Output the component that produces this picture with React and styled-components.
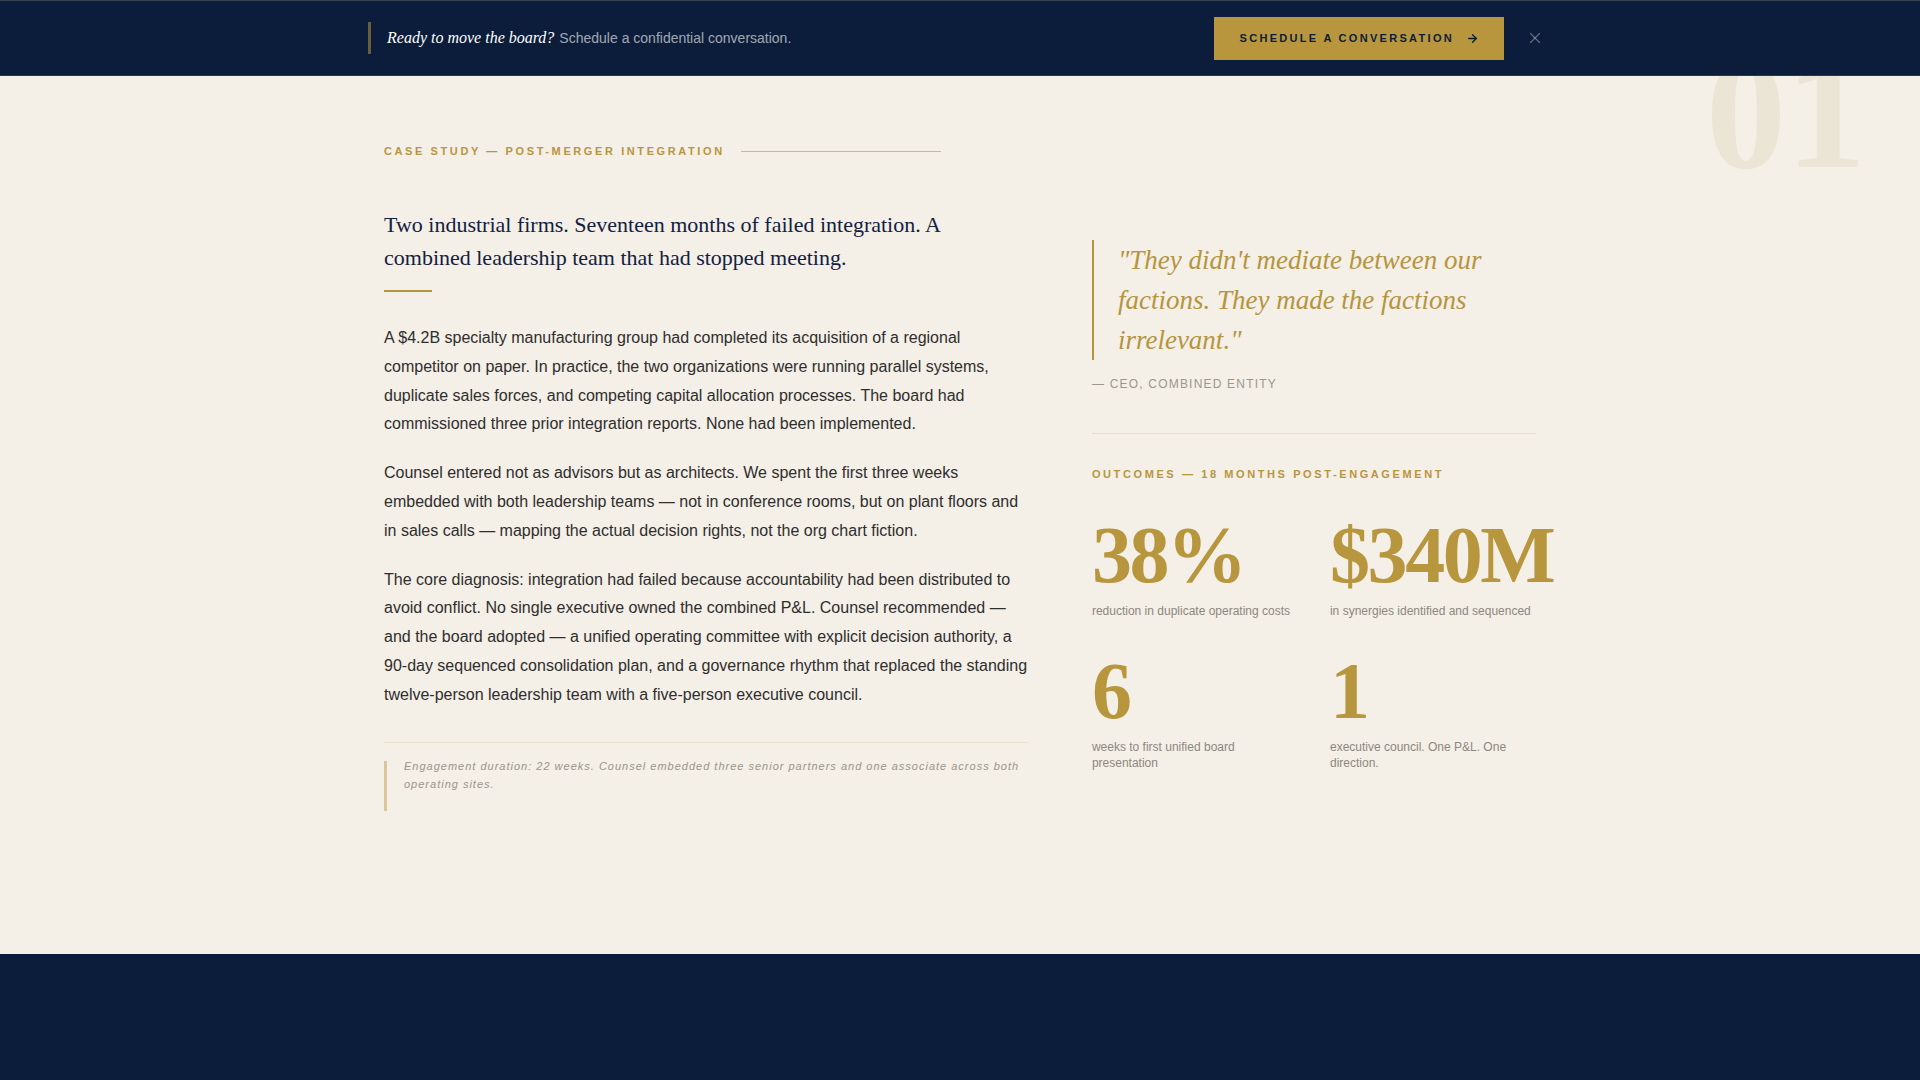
import React from 'react';
import styled, { createGlobalStyle } from 'styled-components';
import { ArrowRight, X } from 'lucide-react';

const navy = '#0c1d3b';
const gold = '#b8963e';
const serif = '"Liberation Serif", "Times New Roman", serif';
const sans = '"Liberation Sans", Arial, sans-serif';

const GlobalStyle = createGlobalStyle`
  * { box-sizing: border-box; }
  html, body { margin: 0; padding: 0; }
  body {
    background: #f4efe7;
    font-family: ${sans};
  }
`;

const outcomes = [
  { value: '38%', label: 'reduction in duplicate operating costs' },
  { value: '$340M', label: 'in synergies identified and sequenced' },
  { value: '6', label: 'weeks to first unified board presentation' },
  { value: '1', label: 'executive council. One P&L. One direction.' },
];

const App = () => {
  return (
    <Page>
      <GlobalStyle />
      <Banner>
        <BannerInner>
          <Pitch>
            <em>Ready to move the board?</em> Schedule a confidential conversation.
          </Pitch>
          <Actions>
            <CtaButton>
              Schedule a conversation
              <ArrowRight size={13} strokeWidth={2.5} />
            </CtaButton>
            <CloseButton aria-label="Close">
              <X size={18} strokeWidth={1.5} />
            </CloseButton>
          </Actions>
        </BannerInner>
      </Banner>

      <CaseSection>
        <Watermark>01</Watermark>
        <Container>
          <Eyebrow>
            <Kicker>Case Study — Post-Merger Integration</Kicker>
            <EyebrowRule />
          </Eyebrow>

          <Columns>
            <Story>
              <Headline>
                Two industrial firms. Seventeen months of failed integration. A combined leadership team that had stopped meeting.
              </Headline>
              <HeadRule />
              <Body>
                <p>
                  A $4.2B specialty manufacturing group had completed its acquisition of a regional competitor on paper. In practice, the two organizations were running parallel systems, duplicate sales forces, and competing capital allocation processes. The board had commissioned three prior integration reports. None had been implemented.
                </p>
                <p>
                  Counsel entered not as advisors but as architects. We spent the first three weeks embedded with both leadership teams — not in conference rooms, but on plant floors and in sales calls — mapping the actual decision rights, not the org chart fiction.
                </p>
                <p>
                  The core diagnosis: integration had failed because accountability had been distributed to avoid conflict. No single executive owned the combined P&amp;L. Counsel recommended — and the board adopted — a unified operating committee with explicit decision authority, a 90-day sequenced consolidation plan, and a governance rhythm that replaced the standing twelve-person leadership team with a five-person executive council.
                </p>
              </Body>
              <NoteArea>
                <Note>
                  Engagement duration: 22 weeks. Counsel embedded three senior partners and one associate across both operating sites.
                </Note>
              </NoteArea>
            </Story>

            <Aside>
              <Quote>"They didn't mediate between our factions. They made the factions irrelevant."</Quote>
              <Attribution>— CEO, Combined Entity</Attribution>
              <AsideRule />
              <Kicker>Outcomes — 18 months post-engagement</Kicker>
              <StatsGrid>
                {outcomes.map(o => (
                  <Stat key={o.value}>
                    <StatValue>{o.value}</StatValue>
                    <StatLabel>{o.label}</StatLabel>
                  </Stat>
                ))}
              </StatsGrid>
            </Aside>
          </Columns>
        </Container>
      </CaseSection>

      <Footer />
    </Page>
  );
};

const Page = styled.div`
  display: flex;
  flex-direction: column;
  min-height: 100vh;
`;

const Banner = styled.div`
  position: fixed;
  top: 0;
  left: 0;
  right: 0;
  z-index: 10;
  height: 76px;
  background: ${navy};
  border-top: 1px solid #3a4152;
  border-bottom: 1px solid rgba(255, 255, 255, 0.12);
`;

const BannerInner = styled.div`
  max-width: 1200px;
  height: 100%;
  margin: 0 auto;
  padding: 0 14px 0 8px;
  display: flex;
  align-items: center;
  justify-content: space-between;
`;

const Pitch = styled.p`
  margin: 0;
  height: 32px;
  display: flex;
  align-items: center;
  gap: 5px;
  padding-left: 16px;
  border-left: 3px solid rgba(184, 150, 62, 0.55);
  font-size: 14px;
  color: rgba(255, 255, 255, 0.62);

  em {
    font-family: ${serif};
    font-size: 16px;
    color: #ffffff;
  }
`;

const Actions = styled.div`
  display: flex;
  align-items: center;
  gap: 20px;
`;

const CtaButton = styled.button`
  height: 43px;
  padding: 0 25px 0 26px;
  display: flex;
  align-items: center;
  gap: 12px;
  border: none;
  background: ${gold};
  color: ${navy};
  font-family: ${sans};
  font-size: 11px;
  font-weight: 700;
  letter-spacing: 2.3px;
  text-transform: uppercase;
  cursor: pointer;
`;

const CloseButton = styled.button`
  display: flex;
  padding: 2px;
  border: none;
  background: transparent;
  color: rgba(255, 255, 255, 0.36);
  cursor: pointer;
`;

const CaseSection = styled.section`
  position: relative;
  overflow: hidden;
  padding: 143px 24px 143px;
`;

const Watermark = styled.span`
  position: absolute;
  top: 33px;
  right: 54px;
  font-family: ${serif};
  font-size: 160px;
  font-weight: 700;
  line-height: 1;
  color: #ebe5d6;
  user-select: none;
`;

const Container = styled.div`
  position: relative;
  max-width: 1152px;
  margin: 0 auto;
`;

const Eyebrow = styled.div`
  display: flex;
  align-items: center;
  gap: 16px;
  margin-bottom: 49px;
`;

const Kicker = styled.div`
  font-size: 11px;
  line-height: 16px;
  font-weight: 700;
  letter-spacing: 2.6px;
  text-transform: uppercase;
  color: ${gold};
`;

const EyebrowRule = styled.span`
  width: 200px;
  height: 1px;
  background: rgba(184, 150, 62, 0.6);
`;

const Columns = styled.div`
  display: grid;
  grid-template-columns: minmax(0, 1.45fr) minmax(0, 1fr);
  gap: 64px;
  align-items: start;
`;

const Story = styled.article``;

const Headline = styled.h2`
  margin: 0;
  max-width: 580px;
  font-family: ${serif};
  font-size: 22px;
  font-weight: 400;
  line-height: 33px;
  color: #13213f;
`;

const HeadRule = styled.div`
  width: 48px;
  height: 2px;
  margin: 16px 0 32px;
  background: ${gold};
`;

const Body = styled.div`
  display: flex;
  flex-direction: column;
  gap: 20px;

  p {
    margin: 0;
    font-size: 16px;
    line-height: 28.8px;
    color: #2e2e2e;
  }
`;

const NoteArea = styled.div`
  margin-top: 32px;
  padding-top: 14px;
  border-top: 1px solid rgba(184, 150, 62, 0.14);
`;

const Note = styled.p`
  position: relative;
  margin: 0;
  padding: 0 0 18px 20px;
  font-size: 11px;
  font-style: italic;
  line-height: 18px;
  letter-spacing: 1px;
  color: #9a958c;

  &::before {
    content: '';
    position: absolute;
    left: 0;
    top: 4px;
    bottom: 0;
    width: 3px;
    background: rgba(184, 150, 62, 0.45);
  }
`;

const Aside = styled.aside`
  padding-top: 32px;
`;

const Quote = styled.blockquote`
  margin: 0;
  padding-left: 24px;
  border-left: 2px solid ${gold};
  font-family: ${serif};
  font-style: italic;
  font-size: 27px;
  line-height: 40px;
  color: #b5953f;
`;

const Attribution = styled.div`
  margin-top: 16px;
  font-size: 12px;
  line-height: 16px;
  letter-spacing: 1.2px;
  text-transform: uppercase;
  color: #9b978f;
`;

const AsideRule = styled.div`
  height: 1px;
  margin: 41px 0 32px;
  background: #e6dfcd;
`;

const StatsGrid = styled.div`
  display: grid;
  grid-template-columns: repeat(2, minmax(0, 1fr));
  column-gap: 32px;
  row-gap: 32px;
  margin-top: 33px;
`;

const Stat = styled.div``;

const StatValue = styled.div`
  font-family: ${serif};
  font-size: 80px;
  font-weight: 700;
  line-height: 1;
  letter-spacing: -0.03em;
  white-space: nowrap;
  color: ${gold};
`;

const StatLabel = styled.div`
  margin-top: 8px;
  font-size: 12px;
  line-height: 16px;
  color: #8c8880;
`;

const Footer = styled.footer`
  flex: 1;
  background: ${navy};
`;

export default App;
